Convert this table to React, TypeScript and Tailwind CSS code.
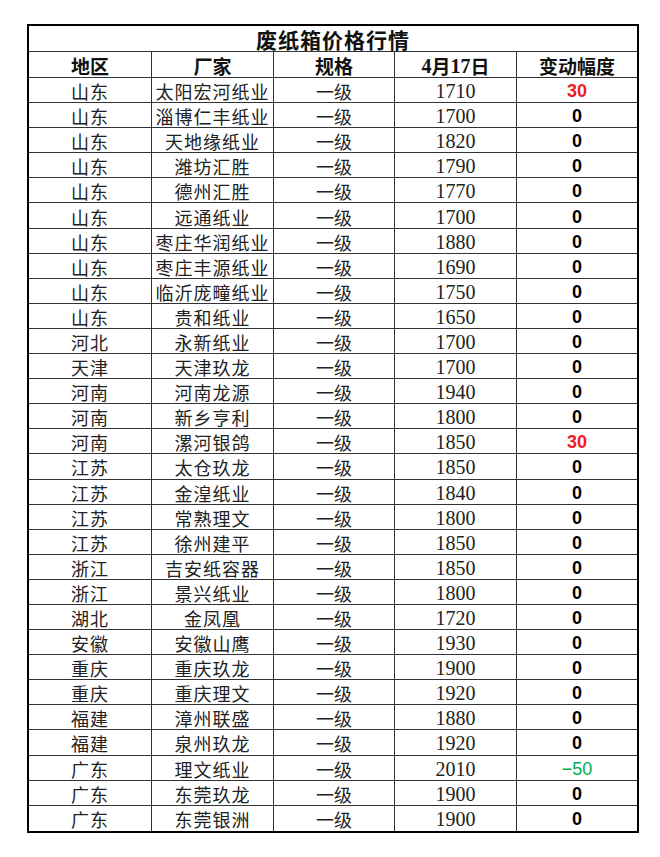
const rows: [string, string, string, string][] = [
  ["山东", "太阳宏河纸业", "1710", "30"],
  ["山东", "淄博仁丰纸业", "1700", "0"],
  ["山东", "天地缘纸业", "1820", "0"],
  ["山东", "潍坊汇胜", "1790", "0"],
  ["山东", "德州汇胜", "1770", "0"],
  ["山东", "远通纸业", "1700", "0"],
  ["山东", "枣庄华润纸业", "1880", "0"],
  ["山东", "枣庄丰源纸业", "1690", "0"],
  ["山东", "临沂庞疃纸业", "1750", "0"],
  ["山东", "贵和纸业", "1650", "0"],
  ["河北", "永新纸业", "1700", "0"],
  ["天津", "天津玖龙", "1700", "0"],
  ["河南", "河南龙源", "1940", "0"],
  ["河南", "新乡亨利", "1800", "0"],
  ["河南", "漯河银鸽", "1850", "30"],
  ["江苏", "太仓玖龙", "1850", "0"],
  ["江苏", "金湟纸业", "1840", "0"],
  ["江苏", "常熟理文", "1800", "0"],
  ["江苏", "徐州建平", "1850", "0"],
  ["浙江", "吉安纸容器", "1850", "0"],
  ["浙江", "景兴纸业", "1800", "0"],
  ["湖北", "金凤凰", "1720", "0"],
  ["安徽", "安徽山鹰", "1930", "0"],
  ["重庆", "重庆玖龙", "1900", "0"],
  ["重庆", "重庆理文", "1920", "0"],
  ["福建", "漳州联盛", "1880", "0"],
  ["福建", "泉州玖龙", "1920", "0"],
  ["广东", "理文纸业", "2010", "-50"],
  ["广东", "东莞玖龙", "1900", "0"],
  ["广东", "东莞银洲", "1900", "0"],
];

const cjk = "font-['SimSun','Noto_Sans_CJK_SC',sans-serif]";
const grid = "grid grid-cols-[123px_122px_121px_122px_1fr]";
const cell = "flex items-center justify-center border-r border-[#333] pt-[2px] leading-none";

function Change({ v }: { v: string }) {
  if (v === "-50")
    return <span className="font-['Liberation_Sans',sans-serif] text-[18px] text-[#00b050]">{"\u221250"}</span>;
  if (v === "30")
    return <span className="font-['Liberation_Sans',sans-serif] text-[18px] font-bold text-[#ee1c25]">30</span>;
  return <span className="font-['Liberation_Sans',sans-serif] text-[18px] font-bold text-black">{v}</span>;
}

export default function App() {
  return (
    <div className="h-[857px] w-[660px] bg-white">
      <div className="ml-[27px] mt-[24px] w-[612px] border-2 border-black text-[#222]">
        {/* title */}
        <div className={`flex h-[26px] items-center justify-center border-b border-[#333] pt-[2px] ${cjk} text-[21px] font-bold tracking-[1px] text-[#111]`}>
          废纸箱价格行情
        </div>
        {/* header */}
        <div className={`${grid} h-[26px] border-b border-[#333] ${cjk} text-[19px] font-bold text-[#111]`}>
          <div className={cell}>地区</div>
          <div className={cell}>厂家</div>
          <div className={cell}>规格</div>
          <div className={cell}>
            <span className="font-['Liberation_Serif',serif] text-[20px]">4</span>月<span className="font-['Liberation_Serif',serif] text-[20px]">17</span>日
          </div>
          <div className="flex items-center justify-center pt-[2px] leading-none">变动幅度</div>
        </div>
        {rows.map(([region, mill, price, change], i) => (
          <div
            key={i}
            className={`${grid} h-[25.1px] ${i < rows.length - 1 ? "border-b border-[#333]" : ""}`}
          >
            <div className={`${cell} ${cjk} text-[18px] tracking-[1px]`}>{region}</div>
            <div className={`${cell} ${cjk} text-[18px] tracking-[1px]`}>{mill}</div>
            <div className={`${cell} ${cjk} text-[18px]`}>一级</div>
            <div className={`${cell} font-['Liberation_Serif',serif] text-[20px]`}>{price}</div>
            <div className="flex items-center justify-center pt-[2px] leading-none">
              <Change v={change} />
            </div>
          </div>
        ))}
      </div>
    </div>
  );
}
